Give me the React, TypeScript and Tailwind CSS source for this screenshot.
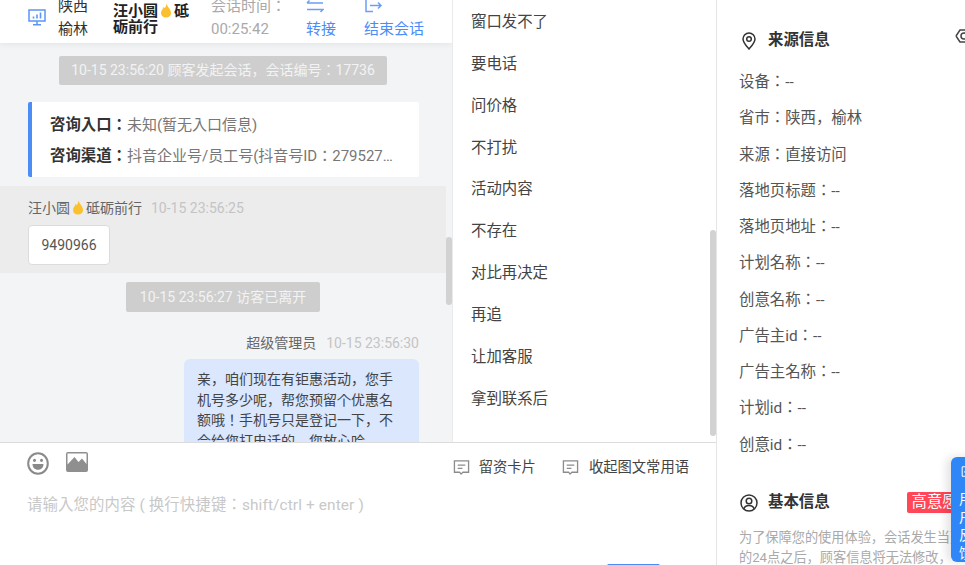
const Flame = () => (
  <svg width="16" height="15" viewBox="0 0 16 15" className="inline-block align-[-2px]">
    <path d="M8.5 0.5C9 3.5 13 6 13 10C13 12.8 11 14.5 8 14.5C5 14.5 3 12.8 3 10C3 7.5 5.2 6 5.8 3.8C6.2 4.2 6.6 4.7 6.9 5.3C7.7 3.8 8.3 2.2 8.5 0.5Z" fill="#fbc02d" />
  </svg>
);

const quick = ["窗口发不了", "要电话", "问价格", "不打扰", "活动内容", "不存在", "对比再决定", "再追", "让加客服", "拿到联系后"];
const source = ["设备：--", "省市：陕西，榆林", "来源：直接访问", "落地页标题：--", "落地页地址：--", "计划名称：--", "创意名称：--", "广告主id：--", "广告主名称：--", "计划id：--", "创意id：--"];

const NoteIcon = () => (
  <svg width="17" height="17" viewBox="0 0 18 18" fill="none" stroke="#8c8c8c" strokeWidth="1.4">
    <path d="M1.5 2H16.5V14H10.5L8.5 16L7 14H1.5Z" />
    <path d="M5 6.5H13M5 10H10" />
  </svg>
);

export default function App() {
  return (
    <div className="relative flex h-[565px] w-[965px] overflow-hidden bg-white text-[15px] text-[#333] font-['Roboto','Noto_Sans_CJK_JP',sans-serif]">
      <div className="flex w-[717px] shrink-0 flex-col border-r border-[#e5e5e5]">
        <div className="relative flex h-[443px] shrink-0 border-b border-[#dcdcdc]">
          <div className="relative flex w-[453px] shrink-0 flex-col overflow-hidden border-r border-[#eaeaea] bg-[#f3f4f6]">
            <div className="relative z-10 flex h-[43px] shrink-0 items-start bg-white pl-[28px] shadow-[0_2px_6px_rgba(0,0,0,0.06)]">
              <svg width="18" height="17" viewBox="0 0 18 17" fill="none" className="mt-[9px] shrink-0" stroke="#5b95f7" strokeWidth="1.5">
                <rect x="1" y="1" width="16" height="11" />
                <path d="M9 12V15.5M5 15.7H13" />
                <path d="M5.5 9.5V7.5M9 9.5V5.5M12.5 9.5V3.5" strokeWidth="1.6" />
              </svg>
              <div className="ml-[12px] mt-[-5px] w-[55px] shrink-0 leading-[23px]">
                <div>陕西</div>
                <div>榆林</div>
              </div>
              <div className="mt-[3px] w-[78px] shrink-0 text-[15px] font-bold leading-[16px] text-[#222]">
                汪小圆<Flame />砥砺前行
              </div>
              <div className="ml-[20px] mt-[-5px] w-[95px] shrink-0 leading-[23px] text-[#a9a9a9]">
                <div>会话时间：</div>
                <div>00:25:42</div>
              </div>
              <div className="flex w-[58px] shrink-0 flex-col items-start text-[#4b8cf7]">
                <svg width="18" height="13" viewBox="0 0 18 13" fill="none" stroke="#6b9ff7" strokeWidth="1.5">
                  <path d="M1 3H17M1 3L3.5 0.5M1 9.5H17L14.5 12" />
                </svg>
                <div className="mt-[7px] leading-[18px]">转接</div>
              </div>
              <div className="flex shrink-0 flex-col items-start text-[#4b8cf7]">
                <svg width="18" height="14" viewBox="0 0 18 14" fill="none" stroke="#6b9ff7" strokeWidth="1.5" className="ml-[1px]">
                  <path d="M1 0V11.5H8M5 5.5H16M13 2.5L16 5.5L13 8.5" />
                </svg>
                <div className="mt-[6px] leading-[18px]">结束会话</div>
              </div>
            </div>

            <div className="mt-[13px] flex shrink-0 justify-center pr-[6px] text-[14px]">
              <div className="rounded-[2px] bg-[#cecece] px-[12px] leading-[29px] text-[#f3f3f3]">10-15 23:56:20 顾客发起会话，会话编号：17736</div>
            </div>

            <div className="ml-[28px] mt-[17px] h-[75px] w-[391px] shrink-0 rounded-[2px] border-l-[4px] border-[#4b8cf7] bg-white pl-[18px] pt-[8px] leading-[30px]">
              <div className="flex">
                <span className="text-[15.4px] font-bold">咨询入口：</span>
                <span className="text-[#777]">未知(暂无入口信息)</span>
              </div>
              <div className="mt-[1px] flex">
                <span className="shrink-0 text-[15.4px] font-bold">咨询渠道：</span>
                <span className="w-[267px] truncate text-[#777]">抖音企业号/员工号(抖音号ID：279527440916</span>
              </div>
            </div>

            <div className="mt-[9px] h-[87px] w-[446px] shrink-0 bg-[#ececec] pl-[28px] pt-[12px] text-[14px]">
              <div className="flex gap-[9px] leading-[20px]">
                <span className="text-[#666]">汪小圆<Flame />砥砺前行</span>
                <span className="text-[#c4c4c4]">10-15 23:56:25</span>
              </div>
              <div className="mt-[7px] flex h-[40px] w-[82px] items-center justify-center rounded-[4px] border border-[#dcdcdc] bg-white text-[#555]">9490966</div>
            </div>

            <div className="mt-[9px] flex shrink-0 justify-center pr-[6px] text-[14px]">
              <div className="rounded-[2px] bg-[#cecece] px-[14px] leading-[30px] text-[#f3f3f3]">10-15 23:56:27 访客已离开</div>
            </div>

            <div className="mt-[21px] flex shrink-0 justify-end gap-[10px] pr-[33px] text-[14px] leading-[20px]">
              <span className="text-[#666]">超级管理员</span>
              <span className="text-[#c4c4c4]">10-15 23:56:30</span>
            </div>
            <div className="ml-[184px] mt-[6px] w-[235px] shrink-0 rounded-[6px] bg-[#dae7fd] px-[13px] pb-[10px] pt-[10px] text-[14px] leading-[20.6px] text-[#444]">
              亲，咱们现在有钜惠活动，您手机号多少呢，帮您预留个优惠名额哦！手机号只是登记一下，不会给您打电话的，您放心哈
            </div>
            <div className="absolute left-[446px] top-[237px] h-[68px] w-[6px] rounded-[3px] bg-[#d2d2d2]" />
          </div>

          <div className="relative flex-1 pl-[18px] pt-[2px] text-[15.4px]">
            {quick.map((q) => (
              <div key={q} className="h-[41.85px] leading-[41.85px] text-[#444]">{q}</div>
            ))}
            <div className="absolute right-0 top-[230px] h-[206px] w-[6px] rounded-[3px] bg-[#d2d2d2]" />
          </div>
        </div>

        <div className="relative flex-1">
          <div className="flex items-start pl-[27px] pt-[9px]">
            <svg width="22" height="23" viewBox="0 0 22 22" fill="none" preserveAspectRatio="none">
              <circle cx="11" cy="11" r="9.8" stroke="#8a8a8a" strokeWidth="2" />
              <circle cx="7.5" cy="8" r="1.5" fill="#8a8a8a" />
              <circle cx="14.5" cy="8" r="1.5" fill="#8a8a8a" />
              <path d="M5.5 11.5H16.5C16.5 15 14 17 11 17C8 17 5.5 15 5.5 11.5Z" fill="#8a8a8a" />
            </svg>
            <svg width="22" height="20" viewBox="0 0 22 20" className="ml-[17px]">
              <rect x="0" y="0" width="22" height="20" rx="2" fill="#8f8f8f" />
              <path d="M1.5 1.5H20.5V12L16 6.5L12.5 10L8.5 5L1.5 12.5Z" fill="#fff" />
            </svg>
            <div className="ml-auto flex items-center pr-[27px] pt-[5px] text-[14.3px] text-[#444]">
              <NoteIcon />
              <span className="ml-[9px]">留资卡片</span>
              <div className="ml-[26px]"><NoteIcon /></div>
              <span className="ml-[10px]">收起图文常用语</span>
            </div>
          </div>
          <div className="pl-[27px] pt-[17px] text-[15.4px] leading-[20px] tracking-[0.12px] text-[#c8c8c8]">请输入您的内容 ( 换行快捷键：shift/ctrl + enter )</div>
          <div className="absolute left-[607px] top-[121px] h-[10px] w-[53px] rounded-[2px] bg-[#4b8cf7]" />
        </div>
      </div>

      <div className="relative min-w-0 flex-1 pl-[22px] pt-[31px] text-[15.4px]">
        <div className="flex h-[20px] items-center font-bold text-[#333]">
          <svg width="18" height="18" viewBox="0 0 18 18" fill="none" stroke="#333" strokeWidth="1.5" className="ml-[1px] shrink-0">
            <path d="M9 17C6 13.5 3 10.5 3 7A6 6 0 0 1 15 7C15 10.5 12 13.5 9 17Z" />
            <circle cx="9" cy="7" r="2.3" />
          </svg>
          <span className="ml-[10px]">来源信息</span>
        </div>
        <div className="mt-[13px]">
          {source.map((s) => (
            <div key={s} className="h-[36.25px] leading-[36.25px] text-[#555]">{s}</div>
          ))}
        </div>
        <div className="mt-[29px] flex h-[22px] items-center whitespace-nowrap font-bold">
          <svg width="18" height="18" viewBox="0 0 18 18" fill="none" stroke="#333" strokeWidth="1.5" className="ml-[1px] shrink-0">
            <circle cx="9" cy="9" r="8" />
            <circle cx="9" cy="7" r="2.8" />
            <path d="M3.8 15C4.5 12.5 6.5 11.5 9 11.5C11.5 11.5 13.5 12.5 14.2 15" />
          </svg>
          <span className="ml-[10px]">基本信息</span>
          <span className="ml-[77px] shrink-0 rounded-[2px] bg-[#ff4757] px-[5px] font-normal leading-[21px] text-white">高意愿</span>
        </div>
        <div className="mt-[14px] w-[230px] text-[13.2px] leading-[20px] text-[#a9a9a9]">为了保障您的使用体验，会话发生当天的24点之后，顾客信息将无法修改，</div>
        <svg width="14" height="16" viewBox="0 0 14 16" fill="none" stroke="#444" strokeWidth="1.5" className="absolute left-[238px] top-[28px]">
          <path d="M1 8L5 2H14M1 8L5 14H14" />
          <circle cx="9" cy="8" r="3" />
        </svg>
        <div className="absolute left-[234px] top-[457px] flex h-[105px] w-[60px] flex-col rounded-l-[6px] bg-[#2f86f6] pl-[8px] pt-[9px] text-[14px] leading-[18px] text-white shadow-[-4px_0_10px_rgba(0,0,0,0.12)]">
          <svg width="16" height="16" viewBox="0 0 16 16" fill="none" stroke="#fff" strokeWidth="1.5">
            <rect x="1" y="1" width="14" height="14" rx="1" />
            <path d="M4 8L7 11L12 5" />
          </svg>
          <div className="mt-[13px]">用</div>
          <div>户</div>
          <div>反</div>
          <div>馈</div>
        </div>
      </div>
    </div>
  );
}
